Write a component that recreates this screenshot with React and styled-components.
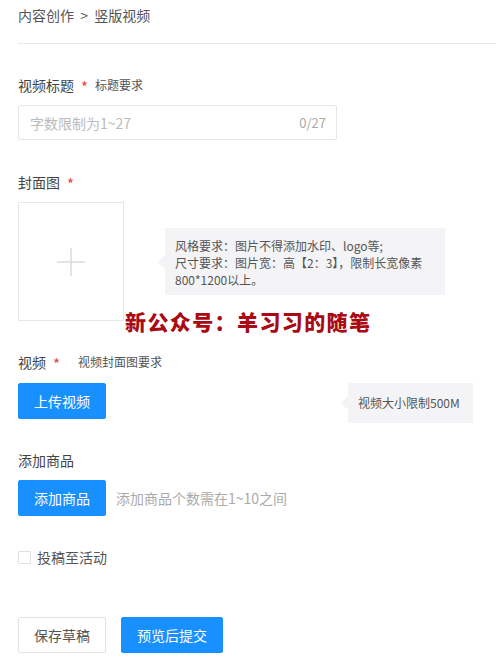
import React from "react";
import styled, { createGlobalStyle } from "styled-components";

const GlobalStyle = createGlobalStyle`
  html, body {
    margin: 0;
    padding: 0;
    background: #fff;
  }
  body {
    font-family: "Noto Sans CJK SC", "Noto Sans", sans-serif;
    color: #444;
  }
`;

const Page = styled.div`
  position: relative;
  width: 496px;
  height: 660px;
  padding-left: 18px;
  box-sizing: border-box;
  overflow: hidden;
`;

const Breadcrumb = styled.div`
  height: 44px;
  box-sizing: border-box;
  padding-top: 5px;
  font-size: 14px;
  line-height: 20px;
  color: #555;
  border-bottom: 1px solid #e9e9e9;
  white-space: pre;
`;

const Section = styled.div`
  margin-top: ${(p) => p.$top}px;
`;

const Label = styled.div`
  display: flex;
  align-items: center;
  font-size: 14px;
  line-height: 20px;
  color: #444;
`;

const Star = styled.span`
  color: #e8453c;
  font-size: 15px;
  margin-left: 7px;
  line-height: 20px;
  position: relative;
  top: 2px;
`;

const Hint = styled.span`
  font-size: 12px;
  color: #555;
  margin-left: ${(p) => p.$gap}px;
`;

const InputBox = styled.div`
  margin-top: 10px;
  width: 319px;
  height: 35px;
  box-sizing: border-box;
  border: 1px solid #e6e6e6;
  border-radius: 2px;
  display: flex;
  align-items: center;
  justify-content: space-between;
  padding: 0 10px 0 11px;
`;

const Placeholder = styled.span`
  font-size: 14px;
  color: #bbb;
`;

const Counter = styled.span`
  font-size: 13px;
  color: #aaa;
`;

const Row = styled.div`
  margin-top: ${(p) => p.$top || 0}px;
  display: flex;
  align-items: ${(p) => p.$align || "center"};
`;

const UploadBox = styled.div`
  width: 106px;
  height: 119px;
  box-sizing: border-box;
  border: 1px solid #e6e6e6;
  display: flex;
  align-items: center;
  justify-content: center;
  flex-shrink: 0;
`;

const Tip = styled.div`
  position: relative;
  margin-left: ${(p) => p.$gap}px;
  background: #f4f4f6;
  font-size: 12px;
  line-height: 17px;
  color: #555;
  box-sizing: border-box;
  width: ${(p) => p.$w}px;
  height: ${(p) => p.$h}px;
  padding: ${(p) => p.$pad};
  &::before {
    content: "";
    position: absolute;
    left: -7px;
    top: 50%;
    margin-top: -7px;
    border-top: 7px solid transparent;
    border-bottom: 7px solid transparent;
    border-right: 7px solid #f4f4f6;
  }
`;

const Button = styled.button`
  height: 36px;
  width: ${(p) => p.$w}px;
  margin-left: ${(p) => p.$ml || 0}px;
  border-radius: 2px;
  font-family: "Noto Sans CJK SC", sans-serif;
  font-size: 14px;
  padding: 0;
  cursor: pointer;
  flex-shrink: 0;
  background: ${(p) => (p.$primary ? "#1890ff" : "#fff")};
  color: ${(p) => (p.$primary ? "#fff" : "#555")};
  border: 1px solid ${(p) => (p.$primary ? "#1890ff" : "#e3e3e3")};
`;

const GoodsHint = styled.span`
  margin-left: 10px;
  font-size: 14px;
  color: #aaa;
`;

const Check = styled.span`
  width: 13px;
  height: 13px;
  box-sizing: border-box;
  border: 1px solid #e0e0e0;
  border-radius: 1px;
  margin-right: 6px;
`;

const CheckLabel = styled.span`
  font-size: 14px;
  line-height: 20px;
  color: #555;
`;

const Watermark = styled.div`
  position: absolute;
  left: 125px;
  top: 308px;
  font-size: 21px;
  line-height: 26px;
  font-weight: 900;
  letter-spacing: 1.4px;
  color: #a90a14;
  white-space: nowrap;
`;

const PlusIcon = () => (
  <svg width="30" height="30" viewBox="0 0 30 30">
    <path d="M15 1v28M1 15h28" stroke="#dcdcdc" strokeWidth="1.5" fill="none" />
  </svg>
);

export default function App() {
  return (
    <>
      <GlobalStyle />
      <Page>
        <Breadcrumb>内容创作  &gt;  竖版视频</Breadcrumb>

        <Section $top={31}>
          <Label>
            视频标题<Star>*</Star>
            <Hint $gap={7}>标题要求</Hint>
          </Label>
          <InputBox>
            <Placeholder>字数限制为1~27</Placeholder>
            <Counter>0/27</Counter>
          </InputBox>
        </Section>

        <Section $top={32}>
          <Label>
            封面图<Star>*</Star>
          </Label>
          <Row $top={10}>
            <UploadBox>
              <PlusIcon />
            </UploadBox>
            <Tip $gap={41} $w={280} $h={67} $pad="9px 10px 6px">
              风格要求：图片不得添加水印、logo等;
              <br />
              尺寸要求：图片宽：高【2：3】，限制长宽像素
              <br />
              800*1200以上。
            </Tip>
          </Row>
        </Section>

        <Section $top={31}>
          <Label>
            视频<Star>*</Star>
            <Hint $gap={18}>视频封面图要求</Hint>
          </Label>
          <Row $top={11} $align="flex-start">
            <Button $primary $w={88}>上传视频</Button>
            <Tip $gap={242} $w={125} $h={40} $pad="11px 10px">
              视频大小限制500M
            </Tip>
          </Row>
        </Section>

        <Section $top={27}>
          <Label>添加商品</Label>
          <Row $top={10}>
            <Button $primary $w={88}>添加商品</Button>
            <GoodsHint>添加商品个数需在1~10之间</GoodsHint>
          </Row>
        </Section>

        <Row $top={31}>
          <Check />
          <CheckLabel>投稿至活动</CheckLabel>
        </Row>

        <Row $top={50}>
          <Button $w={88}>保存草稿</Button>
          <Button $primary $w={102} $ml={15}>预览后提交</Button>
        </Row>

        <Watermark>新公众号：羊习习的随笔</Watermark>
      </Page>
    </>
  );
}
